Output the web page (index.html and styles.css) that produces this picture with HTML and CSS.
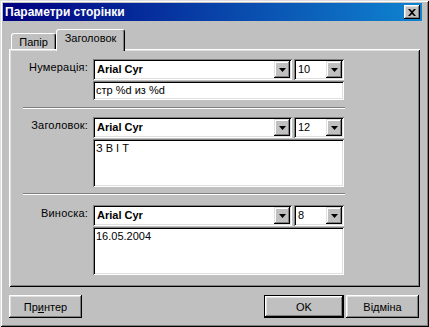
FILE: index.html
```html
<!DOCTYPE html>
<html lang="uk">
<head>
  <meta charset="UTF-8">
  <meta name="viewport" content="width=device-width, initial-scale=1.0">
  <title>Параметри сторінки</title>
  <link rel="stylesheet" href="styles.css">
</head>
<body>
  <div class="window">
    <div class="titlebar">
      <span class="title">Параметри сторінки</span>
      <button class="close-btn" type="button">
        <svg width="8" height="7" viewBox="0 0 8 7"><path d="M0 0h2l2 2 2-2h2L5 3.5 8 7H6L4 5 2 7H0l3-3.5z"/></svg>
      </button>
    </div>

    <div class="dialog-body">
      <div class="tabs">
        <div class="tab">Папір</div>
        <div class="tab tab-active">Заголовок</div>
      </div>

      <div class="panel">
        <div class="field-row">
          <label class="field-label">Нумерація:</label>
          <div class="field-controls">
            <div class="combo-line">
              <div class="combo combo-font">
                <span class="combo-value">Arial Cyr</span>
                <span class="combo-btn"><svg width="7" height="4" viewBox="0 0 7 4"><path d="M0 0h7L3.5 4z"/></svg></span>
              </div>
              <div class="combo combo-size">
                <span class="combo-value">10</span>
                <span class="combo-btn"><svg width="7" height="4" viewBox="0 0 7 4"><path d="M0 0h7L3.5 4z"/></svg></span>
              </div>
            </div>
            <div class="text-box">стр %d из %d</div>
          </div>
        </div>

        <div class="separator sep-first"></div>

        <div class="field-row">
          <label class="field-label">Заголовок:</label>
          <div class="field-controls">
            <div class="combo-line">
              <div class="combo combo-font">
                <span class="combo-value">Arial Cyr</span>
                <span class="combo-btn"><svg width="7" height="4" viewBox="0 0 7 4"><path d="M0 0h7L3.5 4z"/></svg></span>
              </div>
              <div class="combo combo-size">
                <span class="combo-value">12</span>
                <span class="combo-btn"><svg width="7" height="4" viewBox="0 0 7 4"><path d="M0 0h7L3.5 4z"/></svg></span>
              </div>
            </div>
            <div class="text-area">З В І Т</div>
          </div>
        </div>

        <div class="separator sep-second"></div>

        <div class="field-row">
          <label class="field-label">Виноска:</label>
          <div class="field-controls">
            <div class="combo-line">
              <div class="combo combo-font">
                <span class="combo-value">Arial Cyr</span>
                <span class="combo-btn"><svg width="7" height="4" viewBox="0 0 7 4"><path d="M0 0h7L3.5 4z"/></svg></span>
              </div>
              <div class="combo combo-size">
                <span class="combo-value">8</span>
                <span class="combo-btn"><svg width="7" height="4" viewBox="0 0 7 4"><path d="M0 0h7L3.5 4z"/></svg></span>
              </div>
            </div>
            <div class="text-area">16.05.2004</div>
          </div>
        </div>
      </div>

      <div class="buttons">
        <button class="btn btn-printer" type="button">Пр<u>и</u>нтер</button>
        <span class="spacer"></span>
        <button class="btn btn-default" type="button">OK</button>
        <button class="btn btn-cancel" type="button">Відміна</button>
      </div>
    </div>
  </div>
</body>
</html>
```

FILE: styles.css
```css
body {
  margin: 0;
  padding: 0;
  background-color: #c0c0c0;
  font-family: 'Liberation Sans', Arial, sans-serif;
  font-size: 11px;
  color: #000000;
}

.window {
  width: 429px;
  height: 327px;
  box-sizing: border-box;
  padding: 3px 7px 3px 3px;
  background-color: #c0c0c0;
  box-shadow: inset 1px 1px #dfdfdf, inset -1px -1px #000000,
              inset 2px 2px #ffffff, inset -2px -2px #808080;
  display: flex;
  flex-direction: column;
}

/* title bar */
.titlebar {
  height: 18px;
  display: flex;
  align-items: center;
  background: linear-gradient(to right, #000080, #1084d0);
  padding-left: 2px;
}

.title {
  flex: 1;
  color: #ffffff;
  font-weight: bold;
  font-size: 12px;
  white-space: nowrap;
}

.close-btn {
  width: 16px;
  height: 14px;
  margin-right: 2px;
  padding: 0;
  border: none;
  background-color: #c0c0c0;
  box-shadow: inset -1px -1px #000000, inset 1px 1px #ffffff,
              inset -2px -2px #808080, inset 2px 2px #dfdfdf;
  display: flex;
  align-items: center;
  justify-content: center;
}

.close-btn svg {
  display: block;
  margin-left: -1px;
}

/* body */
.dialog-body {
  flex: 1;
  display: flex;
  flex-direction: column;
  padding: 8px 2px 6px 6px;
}

.tabs {
  display: flex;
  align-items: flex-end;
  height: 20px;
  padding-left: 2px;
}

.tab {
  width: 45px;
  height: 16px;
  box-sizing: border-box;
  border-top: 1px solid #ffffff;
  border-left: 1px solid #ffffff;
  border-right: 1px solid #000000;
  border-radius: 3px 3px 0 0;
  box-shadow: inset -1px 0 #808080;
  text-align: center;
  line-height: 15px;
  padding-top: 1px;
}

.tab-active {
  width: 69px;
  height: 22px;
  margin-bottom: -2px;
  background-color: #c0c0c0;
  position: relative;
  z-index: 1;
  line-height: 17px;
  padding-top: 0;
}

.panel {
  height: 238px;
  box-sizing: border-box;
  padding: 10px 75px 0 14px;
  box-shadow: inset 1px 1px #ffffff, inset -1px -1px #000000,
              inset 2px 2px #dfdfdf, inset -2px -2px #808080;
}

.field-row {
  display: grid;
  grid-template-columns: 65px 251px;
  column-gap: 5px;
}

.field-label {
  text-align: right;
  padding-top: 2px;
  line-height: 13px;
  letter-spacing: 0.2px;
  white-space: nowrap;
}

.field-controls {
  display: flex;
  flex-direction: column;
  gap: 1px;
}

.combo-line {
  display: flex;
  gap: 2px;
}

.combo {
  height: 21px;
  box-sizing: border-box;
  padding: 2px;
  display: flex;
  background-color: #ffffff;
  box-shadow: inset 1px 1px #808080, inset -1px -1px #ffffff,
              inset 2px 2px #000000, inset -2px -2px #dfdfdf;
}

.combo-font {
  width: 199px;
}

.combo-font .combo-value {
  font-weight: bold;
}

.combo-size {
  width: 50px;
}

.combo-value {
  flex: 1;
  line-height: 17px;
  padding-left: 2px;
  white-space: nowrap;
}

.combo-btn {
  width: 16px;
  height: 17px;
  background-color: #c0c0c0;
  box-shadow: inset -1px -1px #000000, inset 1px 1px #dfdfdf,
              inset -2px -2px #808080, inset 2px 2px #ffffff;
  display: flex;
  align-items: center;
  justify-content: center;
}

.combo-btn svg {
  display: block;
}

.text-box,
.text-area {
  box-sizing: border-box;
  background-color: #ffffff;
  box-shadow: inset 1px 1px #808080, inset -1px -1px #ffffff,
              inset 2px 2px #000000, inset -2px -2px #dfdfdf;
  white-space: pre;
}

.text-box {
  height: 19px;
  padding: 1px 3px 2px 3px;
  line-height: 16px;
}

.text-area {
  height: 48px;
  padding: 3px 3px;
  line-height: 13px;
}

.separator {
  width: 322px;
  border-top: 1px solid #808080;
  border-bottom: 1px solid #ffffff;
}

.sep-first {
  margin: 7px 0 8px 0;
}

.sep-second {
  margin: 6px 0 10px 0;
}

/* bottom buttons */
.buttons {
  display: flex;
  margin-top: 8px;
  margin-right: 1px;
  gap: 2px;
}

.spacer {
  flex: 1;
}

.btn {
  height: 23px;
  padding: 0;
  border: none;
  font-family: 'Liberation Sans', Arial, sans-serif;
  font-size: 11px;
  font-weight: normal;
  color: #000000;
  background-color: #c0c0c0;
  box-shadow: inset -1px -1px #000000, inset 1px 1px #ffffff,
              inset -2px -2px #808080, inset 2px 2px #dfdfdf;
}

.btn-printer {
  width: 73px;
}

.btn-cancel {
  width: 73px;
}

.btn-default {
  width: 80px;
  border: 1px solid #000000;
}
```
